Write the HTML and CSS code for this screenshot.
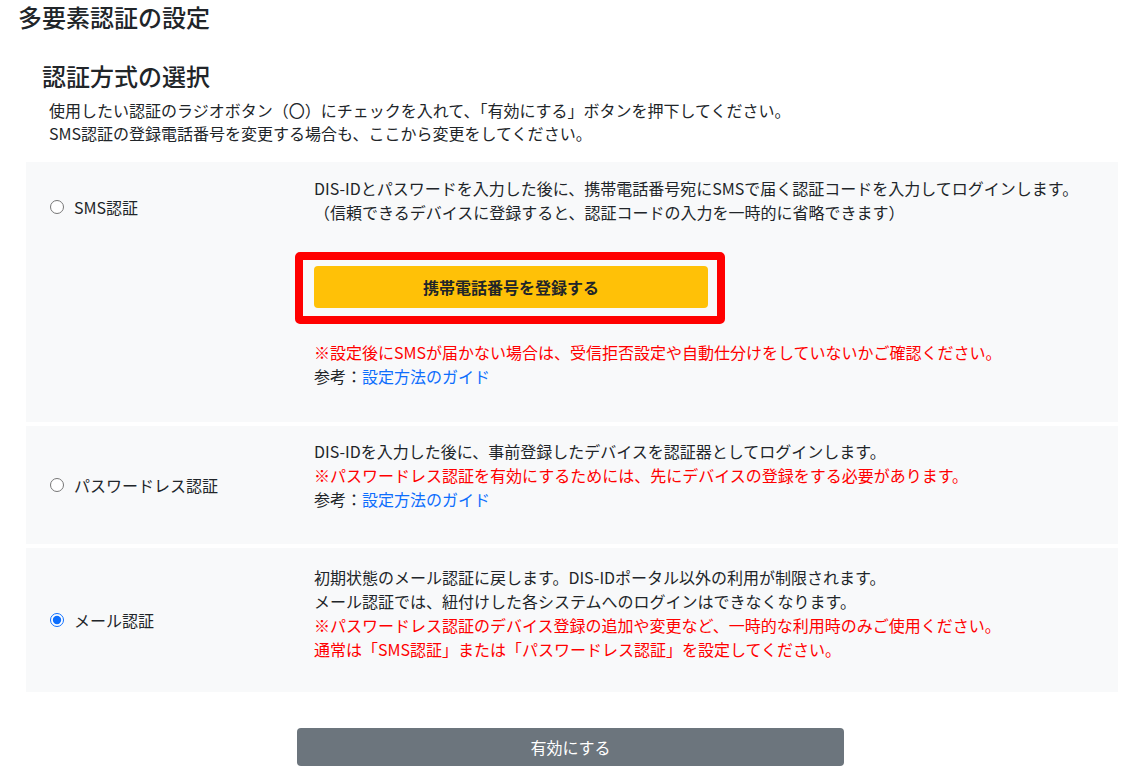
FILE: index.html
```html
<!DOCTYPE html>
<html lang="ja">
<head>
<meta charset="utf-8">
<title>多要素認証の設定</title>
<link rel="stylesheet" href="styles.css">
</head>
<body>
<h1 class="page-title">多要素認証の設定</h1>
<section class="section">
  <h2 class="section-title">認証方式の選択</h2>
  <p class="desc">使用したい認証のラジオボタン（〇）にチェックを入れて、「有効にする」ボタンを押下してください。<br>SMS認証の登録電話番号を変更する場合も、ここから変更をしてください。</p>

  <div class="panels">
    <div class="panel panel-sms">
      <label class="opt opt-top"><input type="radio" name="mfa" class="radio"><span>SMS認証</span></label>
      <div class="body">
        <p class="txt">DIS-IDとパスワードを入力した後に、携帯電話番号宛にSMSで届く認証コードを入力してログインします。<br>（信頼できるデバイスに登録すると、認証コードの入力を一時的に省略できます）</p>
        <div class="highlight"><button class="btn-yellow" type="button">携帯電話番号を登録する</button></div>
        <p class="txt warn-block"><span class="red">※設定後にSMSが届かない場合は、受信拒否設定や自動仕分けをしていないかご確認ください。</span><br>参考：<a class="link" href="#">設定方法のガイド</a></p>
      </div>
    </div>

    <div class="panel panel-pwl">
      <label class="opt"><input type="radio" name="mfa" class="radio"><span>パスワードレス認証</span></label>
      <div class="body">
        <p class="txt">DIS-IDを入力した後に、事前登録したデバイスを認証器としてログインします。<br><span class="red">※パスワードレス認証を有効にするためには、先にデバイスの登録をする必要があります。</span><br>参考：<a class="link" href="#">設定方法のガイド</a></p>
      </div>
    </div>

    <div class="panel panel-mail">
      <label class="opt"><input type="radio" name="mfa" class="radio" checked><span>メール認証</span></label>
      <div class="body">
        <p class="txt">初期状態のメール認証に戻します。DIS-IDポータル以外の利用が制限されます。<br>メール認証では、紐付けした各システムへのログインはできなくなります。<br><span class="red">※パスワードレス認証のデバイス登録の追加や変更など、一時的な利用時のみご使用ください。<br>通常は「SMS認証」または「パスワードレス認証」を設定してください。</span></p>
      </div>
    </div>
  </div>

  <div class="actions"><button class="btn-gray" type="button">有効にする</button></div>
</section>
</body>
</html>
```

FILE: styles.css
```css
* { box-sizing: border-box; }
body {
  margin: 0;
  font-family: "Noto Sans CJK JP", "Noto Sans", sans-serif;
  color: #212529;
  background: #fff;
  font-size: 16px;
  line-height: 24px;
}
.page-title {
  margin: 0;
  padding-left: 18px;
  font-size: 24px;
  line-height: 34px;
  font-weight: 500;
}
.section { padding-top: 25px; }
.section-title {
  margin: 0;
  padding-left: 42px;
  font-size: 24px;
  line-height: 34px;
  font-weight: 500;
}
.desc {
  margin: 6px 0 0;
  padding-left: 49px;
  font-size: 16px;
  line-height: 23px;
}
.panels {
  margin: 17px 23px 0 26px;
  display: flex;
  flex-direction: column;
  gap: 4px;
}
.panel {
  background: #f8f9fa;
  display: flex;
}
.body { flex: 1; padding: 15px 0 32px; }
.panel-sms .body { padding: 14px 0 34px; }
.panel-pwl .body { padding: 13px 0 33px; }
.panel-mail .body { padding: 17px 0 31px; }
.opt {
  width: 288px;
  flex: none;
  display: flex;
  align-items: center;
  align-self: center;
  padding-left: 24px;
  gap: 10px;
}
.opt-top { align-self: flex-start; padding-top: 33px; }
.radio {
  margin: 0;
  width: 14px;
  height: 14px;
  accent-color: #0d6efd;
}
.txt { margin: 0; }
.red { color: #ff0000; }
.link { color: #0d6efd; text-decoration: none; }
.highlight {
  margin: 28px 0 0 -19px;
  width: 430px;
  border: 8px solid #ff0000;
  border-radius: 5px;
  padding: 6px 8px 8px 11px;
}
.btn-yellow {
  display: block;
  width: 394px;
  height: 42px;
  border: none;
  border-radius: 4px;
  background: #ffc107;
  color: #212529;
  font-family: inherit;
  font-size: 16px;
  font-weight: 700;
  cursor: pointer;
}
.warn-block { margin-top: 16px; }
.actions {
  display: flex;
  justify-content: center;
  margin-top: 36px;
}
.btn-gray {
  width: 547px;
  height: 38px;
  border: none;
  border-radius: 4px;
  background: #6c757d;
  color: #fff;
  font-family: inherit;
  font-size: 16px;
  cursor: pointer;
}
```
